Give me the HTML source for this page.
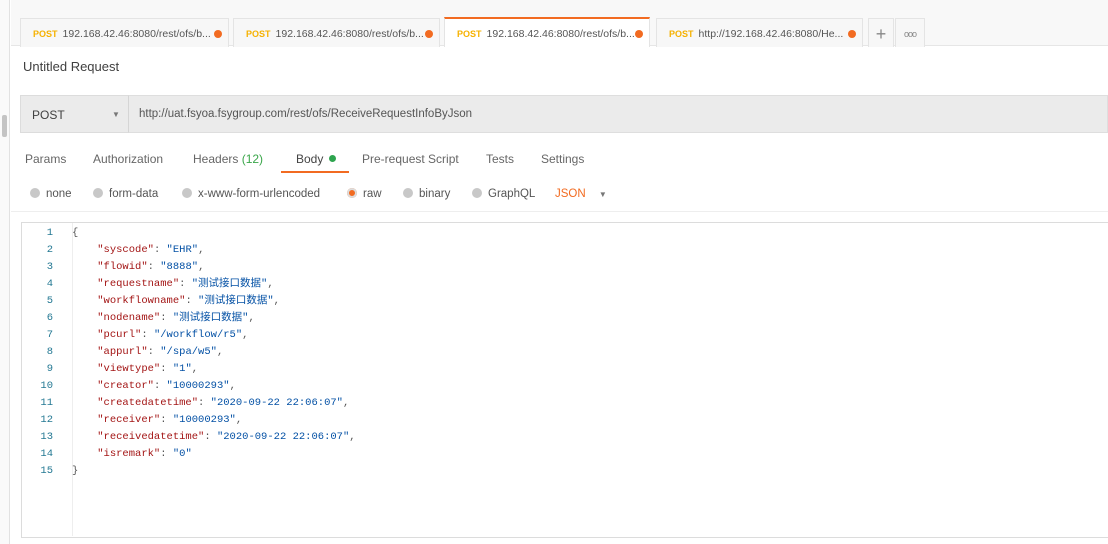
<!DOCTYPE html>
<html><head><meta charset="utf-8"><style>
*{margin:0;padding:0;box-sizing:border-box}
body{width:1108px;height:544px;overflow:hidden;background:#fff;font-family:"Liberation Sans","Noto Sans CJK SC",sans-serif;position:relative;color:#505050}
.abs{position:absolute}
.strip{left:0;top:0;width:10px;height:544px;background:#fafafa;border-right:1px solid #e2e2e2}
.sb{left:2px;top:115px;width:5px;height:22px;background:#c4c4c4;border-radius:2px}
.top{left:11px;top:0;width:1097px;height:46px;background:#f8f8f8;border-bottom:1px solid #e6e6e6}
.tab{top:18px;height:29px;background:#f7f7f7;border:1px solid #e4e4e4;border-bottom:none;font-size:10.5px;line-height:30px;padding-left:12px;color:#555;white-space:nowrap;overflow:hidden}
.tab b{color:#f6b100;font-size:9px;font-weight:bold;margin-right:5px}
.tab i{position:absolute;right:6px;top:11px;width:8px;height:8px;border-radius:50%;background:#f26b21}
.act{background:#fff;border-top:2px solid #f26b21;height:30px}
.title{left:23px;top:59px;font-size:13px;color:#404040}
.url{left:20px;top:95px;width:1088px;height:38px;background:#ebebeb;border:1px solid #dedede}
.meth{left:20px;top:95px;width:109px;height:38px;border:1px solid #dcdcdc;border-right:1px solid #d5d5d5;font-size:12px;line-height:38px;padding-left:11px;color:#404040}
.meth span{position:absolute;left:91px;top:0;font-size:8px;color:#777}
.urltxt{left:139px;top:108px;font-size:11.5px;color:#555}
.nav{top:152px;font-size:12px;color:#666}
.ul{left:281px;top:171px;width:68px;height:2px;background:#f26b21}
.rad{top:187px;font-size:11.5px;color:#555}
.rad i{display:inline-block;width:10px;height:10px;border-radius:50%;background:#c8c8c8;vertical-align:-1px;margin-right:6px}
.div{left:11px;top:211px;width:1097px;height:1px;background:#eee}
.ed{left:21px;top:222px;width:1090px;height:316px;border:1px solid #dcdcdc;border-right:none}
.gut{left:72px;top:223px;width:1px;height:313px;background:#eee}
.code{font-family:"Liberation Mono","Noto Sans CJK SC",monospace;font-size:10.5px;line-height:17px;white-space:pre}
.ln{left:22px;top:225px;width:31px;text-align:right;color:#237893}
.src{left:72px;top:225px;color:#555}
.k{color:#a31515}.v{color:#0451a5}
</style></head><body>
<div class="abs strip"></div><div class="abs sb"></div>
<div class="abs top"></div>
<div class="abs tab" style="left:20px;width:209px"><b>POST</b>192.168.42.46:8080/rest/ofs/b...<i></i></div>
<div class="abs tab" style="left:233px;width:207px"><b>POST</b>192.168.42.46:8080/rest/ofs/b...<i></i></div>
<div class="abs tab act" style="left:444px;width:206px;top:17px"><b>POST</b>192.168.42.46:8080/rest/ofs/b...<i></i></div>
<div class="abs tab" style="left:656px;width:207px"><b>POST</b>http://192.168.42.46:8080/He...<i></i></div>
<div class="abs tab" style="left:868px;width:26px;padding:0;text-align:center;font-size:18px;color:#888">+</div>
<div class="abs tab" style="left:895px;width:30px;padding:0;text-align:center;font-size:9px;color:#888;letter-spacing:-1px">ooo</div>
<div class="abs title">Untitled Request</div>
<div class="abs url"></div>
<div class="abs meth">POST<span>▼</span></div>
<div class="abs urltxt">http://uat.fsyoa.fsygroup.com/rest/ofs/ReceiveRequestInfoByJson</div>
<div class="abs nav" style="left:25px">Params</div>
<div class="abs nav" style="left:93px">Authorization</div>
<div class="abs nav" style="left:193px">Headers <span style="color:#3aa64a">(12)</span></div>
<div class="abs nav" style="left:296px;color:#444">Body <span style="display:inline-block;width:7px;height:7px;border-radius:50%;background:#2ea44f;vertical-align:1px;margin-left:2px"></span></div>
<div class="abs nav" style="left:362px">Pre-request Script</div>
<div class="abs nav" style="left:486px">Tests</div>
<div class="abs nav" style="left:541px">Settings</div>
<div class="abs ul"></div>
<div class="abs rad" style="left:30px;top:188px"><i></i>none</div>
<div class="abs rad" style="left:93px;top:188px"><i></i>form-data</div>
<div class="abs rad" style="left:182px;top:188px"><i></i>x-www-form-urlencoded</div>
<div class="abs rad" style="left:347px;top:188px"><i style="background:#f26b21;box-shadow:inset 0 0 0 2px #ddd"></i>raw</div>
<div class="abs rad" style="left:403px;top:188px"><i></i>binary</div>
<div class="abs rad" style="left:472px;top:188px"><i></i>GraphQL</div>
<div class="abs rad" style="left:555px;top:188px;color:#f26b21">JSON <span style="color:#777;font-size:8px;margin-left:10px">▼</span></div>
<div class="abs div"></div>
<div class="abs ed"></div>
<div class="abs gut"></div>
<div class="abs code ln">1
2
3
4
5
6
7
8
9
10
11
12
13
14
15</div>
<div class="abs code src">{
    <span class="k">"syscode"</span>: <span class="v">"EHR"</span>,
    <span class="k">"flowid"</span>: <span class="v">"8888"</span>,
    <span class="k">"requestname"</span>: <span class="v">"测试接口数据"</span>,
    <span class="k">"workflowname"</span>: <span class="v">"测试接口数据"</span>,
    <span class="k">"nodename"</span>: <span class="v">"测试接口数据"</span>,
    <span class="k">"pcurl"</span>: <span class="v">"/workflow/r5"</span>,
    <span class="k">"appurl"</span>: <span class="v">"/spa/w5"</span>,
    <span class="k">"viewtype"</span>: <span class="v">"1"</span>,
    <span class="k">"creator"</span>: <span class="v">"10000293"</span>,
    <span class="k">"createdatetime"</span>: <span class="v">"2020-09-22 22:06:07"</span>,
    <span class="k">"receiver"</span>: <span class="v">"10000293"</span>,
    <span class="k">"receivedatetime"</span>: <span class="v">"2020-09-22 22:06:07"</span>,
    <span class="k">"isremark"</span>: <span class="v">"0"</span>
}</div>
</body></html>
